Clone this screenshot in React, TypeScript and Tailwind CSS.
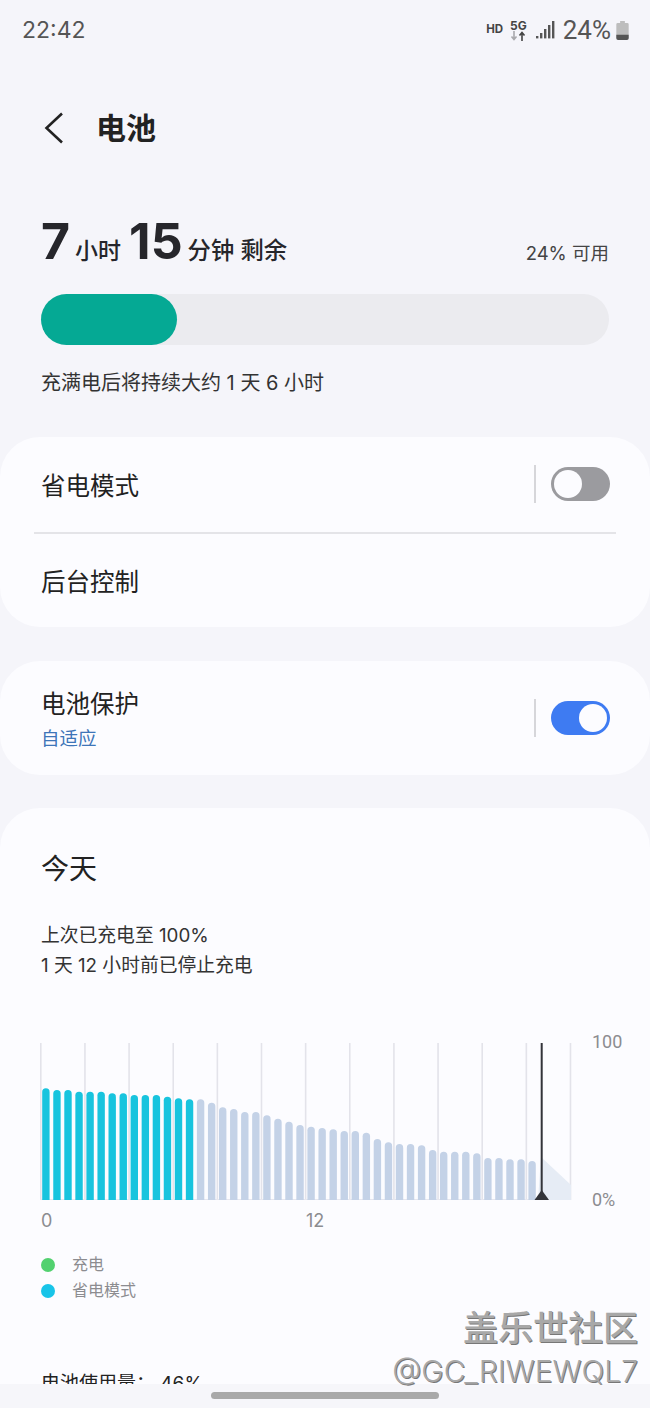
const cyanTops = [175, 180, 180, 185, 185, 185, 190, 190, 195, 195, 195, 200, 205, 208]
const greyTops = [
  208, 218, 232, 237, 246, 246, 256, 266, 275, 285, 290, 294, 298, 303, 303, 308, 327, 337, 342, 342, 346, 360,
  365, 365, 365, 370, 384, 384, 388, 388, 393
]

const CHART_HEIGHT = 158
const BASELINE = 157

const barPath = (x: number, top: number) => {
  const y = BASELINE - (510 - top) / 3
  return `M${x} ${BASELINE}V${y + 3.7}a3.7 3.7 0 0 1 7.4 0V${BASELINE}Z`
}

const UsageChart = () => {
  const lines = Array.from({ length: 13 }, (_, i) => i * 44.14)
  return (
    <svg width="534" height={CHART_HEIGHT} viewBox={`0 0 534 ${CHART_HEIGHT}`} className="ml-[-1px] block shrink-0">
      {lines.map((x) => (
        <rect key={x} x={x} y="0" width="1.6" height={BASELINE} fill="#e3e3ea" />
      ))}
      <rect x="0" y={BASELINE - 1} width="531" height="1" fill="#e6e6ee" />
      <path d="M501 114L531 142V157H498Z" fill="#e6ecf5" />
      {cyanTops.map((top, i) => (
        <path key={i} d={barPath(2.2 + i * 11.05, top)} fill="#18c4de" />
      ))}
      {greyTops.map((top, i) => (
        <path key={i} d={barPath(2.2 + (i + 14) * 11.05, top)} fill="#c4d2e7" />
      ))}
      <rect x="500.7" y="0" width="2" height="150" fill="#33343a" />
      <path d="M501.7 147L509 157H494.5Z" fill="#33343a" />
    </svg>
  )
}

const Toggle = ({ on }: { on: boolean }) => (
  <div className="flex items-center">
    <div className="h-[38px] w-[2px] bg-[#d6d6da]" />
    <div
      className={`ml-[15px] flex h-[34px] w-[59px] items-center rounded-full px-[3px] ${
        on ? 'justify-end bg-[#3e7bf2]' : 'justify-start bg-[#9b9b9f]'
      }`}
    >
      <div className="h-[28px] w-[28px] rounded-full bg-[#fcfcff]" />
    </div>
  </div>
)

const StatusIcons = () => (
  <div className="flex items-center text-[#555]">
    <span className="mr-[7px] text-[11.5px] font-bold text-[#444]">HD</span>
    <div className="mr-[9px] flex flex-col items-center">
      <span className="text-[12px] leading-[11px] font-bold text-[#444]">5G</span>
      <svg width="16" height="10" viewBox="0 0 16 10" fill="none" strokeWidth="1.6">
        <path d="M4 0V8M1.5 5.5L4 8.5L6.5 5.5" stroke="#a9a9ad" />
        <path d="M12 10V2M9.5 4.5L12 1.5L14.5 4.5" stroke="#444" />
      </svg>
    </div>
    <svg width="19" height="18" viewBox="0 0 19 18" className="mr-[8px]" fill="#555">
      <rect x="0" y="15" width="2.4" height="2.4" />
      <rect x="4" y="12" width="2.4" height="5.4" />
      <rect x="8" y="8" width="2.4" height="9.4" />
      <rect x="12" y="4" width="2.4" height="13.4" />
      <rect x="16" y="0" width="2.4" height="17.4" />
    </svg>
    <span className="text-[26px] leading-none text-[#555]" style={{ fontFamily: 'Roboto, sans-serif' }}>
      24%
    </span>
    <svg width="13" height="19" viewBox="0 0 13 20" className="ml-[5px]">
      <path d="M4 0H9V2H11.5Q13 2 13 3.5V18Q13 20 11 20H2Q0 20 0 18V3.5Q0 2 1.5 2H4Z" fill="#bdbdbd" />
      <path d="M0 14.5H13V18Q13 20 11 20H2Q0 20 0 18Z" fill="#555" />
    </svg>
  </div>
)

export default function App() {
  return (
    <div
      className="relative flex h-[1408px] w-[650px] flex-col overflow-hidden bg-[#f5f5fa] text-[#222]"
      style={{ fontFamily: 'Inter, "Noto Sans CJK SC", sans-serif' }}
    >
      <div className="flex h-[60px] shrink-0 items-center justify-between pr-[21px] pl-[22px]">
        <span className="text-[23px] text-[#555]">22:42</span>
        <StatusIcons />
      </div>

      <div className="flex-1 overflow-hidden">
        <div className="flex h-[136px] items-center pl-[44px]">
          <svg width="20" height="32" viewBox="0 0 20 32" fill="none" stroke="#222" strokeWidth="2.6">
            <path d="M18 1.5L2.5 16L18 30.5" />
          </svg>
          <h1 className="ml-[32px] text-[30px] font-bold text-[#222]">电池</h1>
        </div>

        <div className="px-[41px]">
          <div className="flex h-[98px] items-start justify-between pt-[13px]">
            <div className="flex items-baseline font-medium text-[#26262b]">
              <span className="text-[50px] leading-[64px] font-bold">7</span>
              <span className="ml-[5px] text-[23px]">小时</span>
              <span className="ml-[8px] text-[50px] leading-[64px] font-bold">15</span>
              <span className="ml-[5px] text-[23.3px]">分钟 剩余</span>
            </div>
            <span className="mt-[30px] text-[18.5px] leading-[28px] text-[#444]">24% 可用</span>
          </div>
          <div className="h-[51px] w-[568px] rounded-full bg-[#ebebef]">
            <div className="h-[51px] w-[136px] rounded-full bg-[#05a994]" />
          </div>
          <p className="mt-[24px] text-[20px] leading-[28px] text-[#333]">充满电后将持续大约 1 天 6 小时</p>
        </div>

        <div className="mt-[40px] rounded-[40px] bg-[#fcfcff]">
          <div className="flex h-[95px] items-center justify-between pr-[40px] pb-[1px] pl-[41px]">
            <span className="mt-[4px] text-[24.5px]">省电模式</span>
            <Toggle on={false} />
          </div>
          <div className="mx-[34px] h-[2px] bg-[#e4e4e8]" />
          <div className="flex h-[93px] items-center pl-[41px]">
            <span className="mt-[4px] text-[24.5px]">后台控制</span>
          </div>
        </div>

        <div className="mt-[34px] flex h-[114px] items-center justify-between rounded-[40px] bg-[#fcfcff] pr-[40px] pl-[41px]">
          <div className="pt-[2px]">
            <div className="text-[24.5px] leading-[34px]">电池保护</div>
            <div className="mt-[3px] text-[18.5px] leading-[28px] text-[#3e75b8]">自适应</div>
          </div>
          <Toggle on={true} />
        </div>

        <div className="mt-[33px] h-[600px] rounded-t-[40px] bg-[#fcfcff] px-[41px]">
          <h2 className="pt-[40px] text-[28px] leading-[42px] text-[#222]">今天</h2>
          <div className="mt-[31px] text-[18.8px] leading-[30px] text-[#333]">
            <div>上次已充电至 100%</div>
            <div>1 天 12 小时前已停止充电</div>
          </div>
          <div className="mt-[62px] flex">
            <UsageChart />
            <div
              className="mt-[-15px] ml-[18px] flex h-[186px] flex-col justify-between text-[18px] leading-[28px] text-[#8c8c90]"
              style={{ fontFamily: 'Roboto, sans-serif' }}
            >
              <span>100</span>
              <span>0%</span>
            </div>
          </div>
          <div className="relative mt-[-6px] h-[26px] text-[18px] leading-[26px] text-[#8c8c90]">
            <span>0</span>
            <span className="absolute left-[265px]">12</span>
          </div>
          <div className="mt-[18px] flex flex-col gap-[1px] text-[16px] leading-[25px] text-[#8c8c90]">
            <div className="flex items-center gap-[17px]">
              <div className="h-[14px] w-[14px] rounded-full bg-[#52d16f]" />
              <span>充电</span>
            </div>
            <div className="flex items-center gap-[17px]">
              <div className="h-[14px] w-[14px] rounded-full bg-[#18c4e8]" />
              <span>省电模式</span>
            </div>
          </div>
          <p className="mt-[67px] text-[19px] leading-[28px] text-[#222]">电池使用量： 46%</p>
        </div>
      </div>

      <div className="flex h-[24px] shrink-0 items-center justify-center bg-[#f6f6fa]">
        <div className="mb-[1px] h-[7px] w-[228px] rounded-full bg-[#a9a9a9]" />
      </div>

      <div className="absolute right-[12px] bottom-[17px] flex flex-col items-end text-[#a8a8a8]">
        <span className="text-[35px] leading-[46px] font-medium [text-shadow:1px_1px_0_#777]">盖乐世社区</span>
        <span className="text-[30px] leading-[40px] font-light [text-shadow:1px_1px_0_#777]">@GC_RIWEWQL7</span>
      </div>
    </div>
  )
}
